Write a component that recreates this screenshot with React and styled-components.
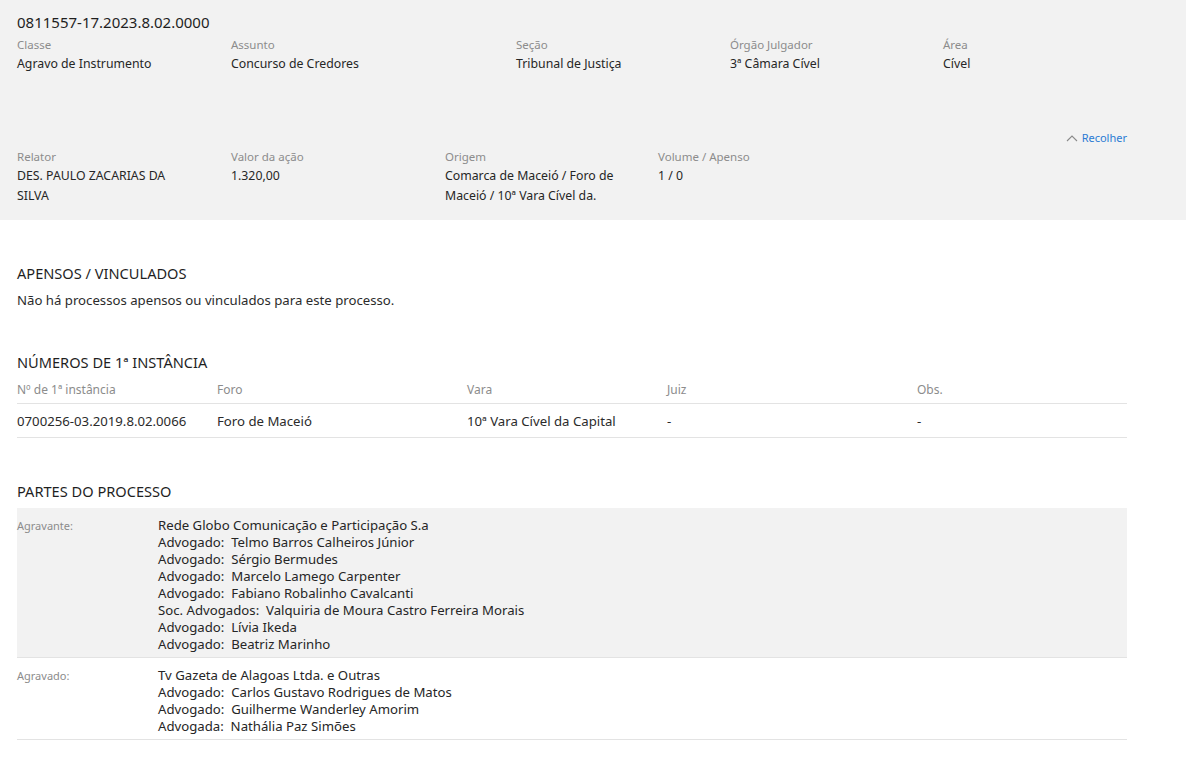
import React from "react";
import styled, { createGlobalStyle } from "styled-components";

const GlobalStyle = createGlobalStyle`
  body {
    margin: 0;
    background: #fff;
    font-family: "Noto Sans", "Open Sans", sans-serif;
    color: #2b2b2b;
  }
`;

const topFields = [
  { label: "Classe", value: "Agravo de Instrumento", width: 214 },
  { label: "Assunto", value: "Concurso de Credores", width: 285 },
  { label: "Seção", value: "Tribunal de Justiça", width: 214 },
  { label: "Órgão Julgador", value: "3ª Câmara Cível", width: 213 },
  { label: "Área", value: "Cível", width: 214 },
];

const moreFields = [
  { label: "Relator", value: "DES. PAULO ZACARIAS DA SILVA", width: 214 },
  { label: "Valor da ação", value: "1.320,00", width: 214 },
  { label: "Origem", value: "Comarca de Maceió / Foro de Maceió / 10ª Vara Cível da.", width: 213 },
  { label: "Volume / Apenso", value: "1 / 0", width: 214 },
];

const instancias = [
  {
    numero: "0700256-03.2019.8.02.0066",
    foro: "Foro de Maceió",
    vara: "10ª Vara Cível da Capital",
    juiz: "-",
    obs: "-",
  },
];

const partes = [
  {
    tipo: "Agravante:",
    nome: "Rede Globo Comunicação e Participação S.a",
    shaded: true,
    reps: [
      ["Advogado", "Telmo Barros Calheiros Júnior"],
      ["Advogado", "Sérgio Bermudes"],
      ["Advogado", "Marcelo Lamego Carpenter"],
      ["Advogado", "Fabiano Robalinho Cavalcanti"],
      ["Soc. Advogados", "Valquiria de Moura Castro Ferreira Morais"],
      ["Advogado", "Lívia Ikeda"],
      ["Advogado", "Beatriz Marinho"],
    ],
  },
  {
    tipo: "Agravado:",
    nome: "Tv Gazeta de Alagoas Ltda. e Outras",
    shaded: false,
    reps: [
      ["Advogado", "Carlos Gustavo Rodrigues de Matos"],
      ["Advogado", "Guilherme Wanderley Amorim"],
      ["Advogada", "Nathália Paz Simões"],
    ],
  },
];

const Page = styled.div`
  width: 100%;
`;

const Header = styled.header`
  background: #f2f2f2;
`;

const HeaderMain = styled.div`
  padding: 12px 17px 48px;
`;

const ProcessNumber = styled.div`
  font-size: 15px;
  line-height: 20px;
  color: #1f1f1f;
  margin-bottom: 3px;
`;

const FieldRow = styled.div`
  display: flex;
`;

const Field = styled.div`
  width: ${(p) => p.$width}px;
  flex: none;
  padding-right: 40px;
  box-sizing: border-box;
`;

const FieldLabel = styled.div`
  font-size: 11.5px;
  line-height: 19px;
  color: #8c8c8c;
`;

const FieldValue = styled.div`
  font-size: 12.3px;
  line-height: 20px;
  color: #262626;
`;

const HeaderMore = styled.div`
  padding: 7px 59px 14px 17px;
`;

const CollapseBar = styled.div`
  display: flex;
  justify-content: flex-end;
  height: 18px;
`;

const CollapseLink = styled.a`
  display: flex;
  align-items: center;
  gap: 4px;
  font-size: 11px;
  line-height: 16px;
  color: #2b7bd4;
  text-decoration: none;
  cursor: pointer;
`;

const Content = styled.main`
  padding: 43px 59px 20px 17px;
`;

const Section = styled.section`
  margin-bottom: ${(p) => p.$gap || 42}px;
`;

const SectionTitle = styled.h2`
  margin: 0 0 7px;
  font-size: 14.6px;
  line-height: 20px;
  font-weight: 400;
  color: #1f1f1f;
  text-transform: uppercase;
`;

const Paragraph = styled.p`
  margin: 0;
  font-size: 13.2px;
  line-height: 20px;
`;

const Table = styled.table`
  width: 100%;
  border-collapse: collapse;
  margin-top: -7px;
`;

const HeadCell = styled.th`
  width: ${(p) => (p.$width ? `${p.$width}px` : "auto")};
  text-align: left;
  font-weight: 400;
  font-size: 12px;
  line-height: 18px;
  color: #8c8c8c;
  padding: 9px 0 4px;
  border-bottom: 1px solid #e3e3e3;
`;

const Cell = styled.td`
  font-size: 13.2px;
  line-height: 20px;
  padding: 7px 0 6px;
  border-bottom: 1px solid #e3e3e3;
`;

const PartyRow = styled.div`
  display: flex;
  padding: 9px 0 4px;
  background: ${(p) => (p.$shaded ? "#f2f2f2" : "transparent")};
  border-bottom: 1px solid #e3e3e3;
`;

const PartyType = styled.div`
  width: 141px;
  flex: none;
  font-size: 11px;
  line-height: 17px;
  color: #8c8c8c;
`;

const PartyNames = styled.div`
  font-size: 13.2px;
  line-height: 17px;
  color: #262626;
  white-space: pre;
`;

function ChevronUp() {
  return (
    <svg width="12" height="8" viewBox="0 0 12 8" fill="none">
      <path d="M1 7 L6 2 L11 7" stroke="#8a8a8a" strokeWidth="1.1" />
    </svg>
  );
}

function FieldGrid({ fields }) {
  return (
    <FieldRow>
      {fields.map((f) => (
        <Field key={f.label} $width={f.width}>
          <FieldLabel>{f.label}</FieldLabel>
          <FieldValue>{f.value}</FieldValue>
        </Field>
      ))}
    </FieldRow>
  );
}

export default function App() {
  return (
    <Page>
      <GlobalStyle />
      <Header>
        <HeaderMain>
          <ProcessNumber>0811557-17.2023.8.02.0000</ProcessNumber>
          <FieldGrid fields={topFields} />
        </HeaderMain>
        <HeaderMore>
          <CollapseBar>
            <CollapseLink>
              <ChevronUp />
              Recolher
            </CollapseLink>
          </CollapseBar>
          <FieldGrid fields={moreFields} />
        </HeaderMore>
      </Header>

      <Content>
        <Section>
          <SectionTitle>Apensos / Vinculados</SectionTitle>
          <Paragraph>Não há processos apensos ou vinculados para este processo.</Paragraph>
        </Section>

        <Section $gap={43}>
          <SectionTitle>Números de 1ª Instância</SectionTitle>
          <Table>
            <thead>
              <tr>
                <HeadCell $width={200}>Nº de 1ª instância</HeadCell>
                <HeadCell $width={250}>Foro</HeadCell>
                <HeadCell $width={200}>Vara</HeadCell>
                <HeadCell $width={250}>Juiz</HeadCell>
                <HeadCell>Obs.</HeadCell>
              </tr>
            </thead>
            <tbody>
              {instancias.map((r) => (
                <tr key={r.numero}>
                  <Cell>{r.numero}</Cell>
                  <Cell>{r.foro}</Cell>
                  <Cell>{r.vara}</Cell>
                  <Cell>{r.juiz}</Cell>
                  <Cell>{r.obs}</Cell>
                </tr>
              ))}
            </tbody>
          </Table>
        </Section>

        <Section>
          <SectionTitle>Partes do Processo</SectionTitle>
          {partes.map((p) => (
            <PartyRow key={p.tipo} $shaded={p.shaded}>
              <PartyType>{p.tipo}</PartyType>
              <PartyNames>
                <div>{p.nome}</div>
                {p.reps.map(([role, name]) => (
                  <div key={name}>{`${role}:  ${name}`}</div>
                ))}
              </PartyNames>
            </PartyRow>
          ))}
        </Section>
      </Content>
    </Page>
  );
}
